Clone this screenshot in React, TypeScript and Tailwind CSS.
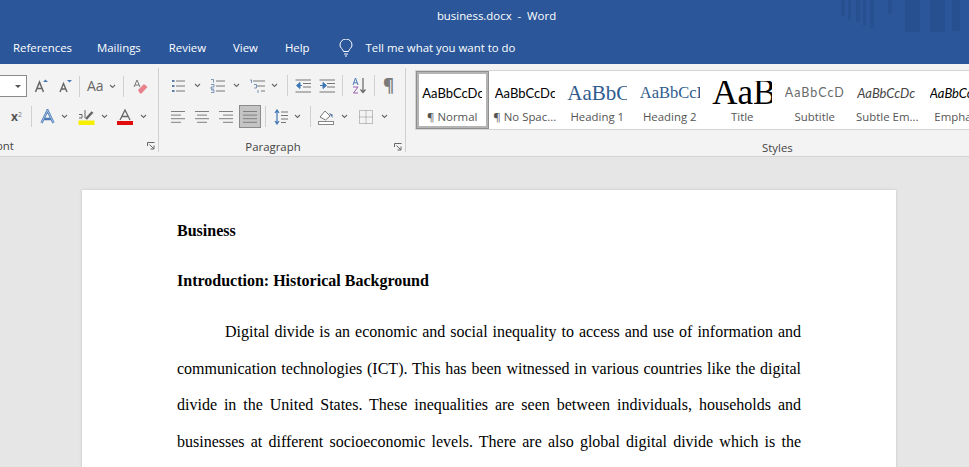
import React from 'react';

const ui = { fontFamily: '"Open Sans", "Noto Sans", sans-serif' };

type IconProps = { children: React.ReactNode; w?: number; h?: number; className?: string };

function Icon({ children, w = 16, h = 16, className = '' }: IconProps) {
  return (
    <svg width={w} height={h} viewBox={`0 0 ${w} ${h}`} fill="none" className={`block shrink-0 ${className}`}>
      {children}
    </svg>
  );
}

function Chevron({ className = '' }: { className?: string }) {
  return (
    <svg width="7" height="5" viewBox="0 0 7 5" fill="none" className={`block shrink-0 ${className}`}>
      <path d="M1 1l2.5 2.5L6 1" stroke="#6a6a6a" strokeWidth="1.1" />
    </svg>
  );
}

function Divider({ className = '' }: { className?: string }) {
  return <div className={`h-[21px] w-px shrink-0 bg-[#d0d0d0] ${className}`} />;
}

function Launcher({ className = '' }: { className?: string }) {
  return (
    <svg width="8" height="8" viewBox="0 0 8 8" fill="none" className={`block shrink-0 ${className}`}>
      <path d="M0.5 4V0.5H7.5M2.5 2.5l4 4M7 3.5V7H3.5" stroke="#666" strokeWidth="1" />
    </svg>
  );
}

function Lines({ rows, w = 14 }: { rows: [number, number][]; w?: number }) {
  return (
    <Icon w={w} h={14}>
      {rows.map(([x1, x2], i) => (
        <path key={i} d={`M${x1} ${1.5 + i * 3.6}H${x2}`} stroke="#7f7f7f" />
      ))}
    </Icon>
  );
}

function FontGroup() {
  return (
    <div className="relative flex h-[84px] w-[159px] shrink-0 flex-col border-r border-[#d0d0d0]">
      <div className="mt-[7px] flex h-[22px] items-center">
        <div className="flex h-[22px] w-[27px] items-center justify-end border-y border-r border-[#8a8a8a] bg-white pr-[5px]">
          <div className="h-0 w-0 border-x-[3px] border-t-[3px] border-x-transparent border-t-[#555]" />
        </div>
        <div className="ml-[7px] flex w-[14px] items-center justify-center">
          <Icon w={14} h={14}>
            <path d="M1.5 13L5.5 3 9.5 13M3 9.5H8" stroke="#666" strokeWidth="1.5" />
            <path d="M9 3l2.5-2.5L14 3z" fill="#4a7ab5" />
          </Icon>
        </div>
        <div className="ml-[11px] flex w-[12px] items-center justify-center">
          <Icon w={13} h={14}>
            <path d="M1 13l3.500-8.500L8 13M2.500 10H6.500" stroke="#666" strokeWidth="1.400" />
            <path d="M8 1h5l-2.500 2.500z" fill="#4a7ab5" />
          </Icon>
        </div>
        <Divider className="ml-[8px]" />
        <span className="ml-[7px] text-[14px] leading-none text-[#666]">Aa</span>
        <Chevron className="ml-[5px]" />
        <Divider className="ml-[7px]" />
        <div className="ml-[9px]">
          <Icon w={15} h={15}>
            <path d="M1 8L4 1l3 7M2 6h4" stroke="#777" strokeWidth="1" />
            <path d="M5 11l6-6 3.500 3-6 6.500H7z" fill="#e8808e" />
          </Icon>
        </div>
      </div>
      <div className="mt-[9px] flex h-[22px] items-center pl-[11px]">
        <span className="text-[12px] font-bold leading-none text-[#555]">x</span>
        <span className="mb-[5px] text-[7px] leading-none text-[#777]">2</span>
        <Divider className="ml-[9px]" />
        <div className="ml-[8px]">
          <Icon w={15} h={15}>
            <path d="M1.500 14L7.500 1.500 13.500 14M4 10h7" stroke="#4a7ab5" strokeWidth="2.400" />
            <path d="M1.500 14L7.500 1.500 13.500 14" stroke="#cfe0f2" strokeWidth="0.700" />
          </Icon>
        </div>
        <Chevron className="ml-[6px]" />
        <div className="ml-[10px]">
          <Icon w={17} h={16}>
            <rect x="0.500" y="11.500" width="16" height="4.500" fill="#f6f000" />
            <path d="M8 10l6.500-7" stroke="#666" strokeWidth="2.500" />
            <path d="M1 5.500h3v3.500H1M7 1v8" stroke="#666" strokeWidth="1" />
          </Icon>
        </div>
        <Chevron className="ml-[6px]" />
        <div className="ml-[9px]">
          <Icon w={16} h={16}>
            <path d="M3 11L8 1l5 10M5 7.500h6" stroke="#666" strokeWidth="1.300" />
            <rect y="12" width="16" height="4" fill="#e00b0b" />
          </Icon>
        </div>
        <Chevron className="ml-[7px]" />
      </div>
      <div className="relative mt-[11px] h-[16px] text-[11.4px] leading-[16px] text-[#444]">
        <span className="absolute left-[-10px]">Font</span>
        <Launcher className="absolute left-[147px] top-[4px]" />
      </div>
    </div>
  );
}

function ParagraphGroup() {
  return (
    <div className="relative flex h-[84px] w-[247px] shrink-0 flex-col border-r border-[#d0d0d0]">
      <div className="mt-[7px] flex h-[22px] items-center pl-[12px]">
        <Icon w={15} h={14}>
          <path d="M5 2H14M5 7H14M5 12H14" stroke="#777" />
          <path d="M1 2h2.500M1 7h2.500M1 12h2.500" stroke="#5d7ea8" strokeWidth="2" />
        </Icon>
        <Chevron className="ml-[8px]" />
        <Icon w={15} h={14} className="ml-[9px]">
          <path d="M6 2H15M6 7H15M6 12H15" stroke="#777" />
          <path d="M1 0.500h2.500V3.500M1 5.500h3V8H1V10h3M1 11h3v2.500H1" stroke="#5d7ea8" strokeWidth="0.800" />
        </Icon>
        <Chevron className="ml-[8px]" />
        <Icon w={17} h={14} className="ml-[9px]">
          <path d="M4 2H16M8 7H16M12 12H16" stroke="#777" />
          <path d="M1 1h1.500V4M5 5.500h2.500V9H5M9 11v3" stroke="#5d7ea8" strokeWidth="0.800" />
        </Icon>
        <Chevron className="ml-[5px]" />
        <Divider className="ml-[9px]" />
        <Icon w={17} h={14} className="ml-[7px]">
          <path d="M0.500 1H16M8 4.500H16M8 8H16M0.500 13H16" stroke="#777" />
          <path d="M7 6.500H2M5 3.500L1.500 6.500 5 9.500z" fill="#3f77b5" stroke="#3f77b5" />
        </Icon>
        <Icon w={17} h={14} className="ml-[7px]">
          <path d="M0.500 1H16M8 4.500H16M8 8H16M0.500 13H16" stroke="#777" />
          <path d="M1 6.500H5M4 3.500L7.500 6.500 4 9.500z" fill="#3f77b5" stroke="#3f77b5" />
        </Icon>
        <Divider className="ml-[6px]" />
        <Icon w={15} h={17} className="ml-[9px]">
          <path d="M1 8L3.500 1 6 8M2 5.800h3" stroke="#4a7ab5" />
          <path d="M1 10h5L1.500 16H6" stroke="#9a5fb3" />
          <path d="M11 1v14M8.500 12.500L11 15.500l2.500-3" stroke="#666" strokeWidth="1.200" />
        </Icon>
        <Divider className="ml-[7px]" />
        <span className="ml-[8px] text-[17px] font-bold leading-none text-[#7a7a7a]">¶</span>
      </div>
      <div className="mt-[9px] flex h-[23px] items-center pl-[12px]">
        <Lines rows={[[0, 14], [0, 10], [0, 14], [0, 10]]} />
        <div className="ml-[10px]">
          <Lines rows={[[0, 14], [2, 12], [0, 14], [2, 12]]} />
        </div>
        <div className="ml-[10px]">
          <Lines rows={[[0, 14], [4, 14], [0, 14], [4, 14]]} />
        </div>
        <div className="ml-[6px] flex h-[23px] w-[22px] items-center justify-center border border-[#8b8b8b] bg-[#c4c4c4]">
          <Lines rows={[[0, 14], [0, 14], [0, 14], [0, 14]]} />
        </div>
        <Divider className="ml-[4px]" />
        <Icon w={14} h={16} className="ml-[8px]">
          <path d="M7 3H14M7 6.500H14M7 10H14M7 13.500H12" stroke="#777" />
          <path d="M3 1v14M1 4l2-3 2 3M1 12l2 3 2-3" stroke="#3f77b5" strokeWidth="1.200" />
        </Icon>
        <Chevron className="ml-[6px]" />
        <Divider className="ml-[9px]" />
        <Icon w={17} h={16} className="ml-[7px]">
          <path d="M2 8l5-6 5 5-4.500 4z" stroke="#777" fill="#fff" />
          <path d="M11 4l3.500 1.500V9z" fill="#4a6f9c" />
          <rect x="0.500" y="12.500" width="15" height="3" stroke="#888" fill="#fff" />
        </Icon>
        <Chevron className="ml-[6px]" />
        <Icon w={14} h={14} className="ml-[11px]">
          <path d="M0.500 0.500H13.500V13.500H0.500ZM7 0.500V13.500M0.500 7H13.500" stroke="#8a8a8a" strokeDasharray="1 1" />
        </Icon>
        <Chevron className="ml-[8px]" />
      </div>
      <div className="relative mt-[11px] h-[16px] text-center text-[11.4px] leading-[16px] text-[#444]">
        <span className="relative left-[-9px]">Paragraph</span>
        <Launcher className="absolute left-[235px] top-[4px]" />
      </div>
    </div>
  );
}

const calibri = '"Lato", sans-serif';
const cambria = '"Liberation Serif", serif';

const styles = [
  { preview: 'AaBbCcDc', label: '¶ Normal', cls: 'text-[13px] text-black', font: calibri },
  { preview: 'AaBbCcDc', label: '¶ No Spac...', cls: 'text-[13px] text-black', font: calibri },
  { preview: 'AaBbC', label: 'Heading 1', cls: 'text-[21px] text-[#2f5c8f]', font: cambria },
  { preview: 'AaBbCcI', label: 'Heading 2', cls: 'text-[16.500px] text-[#2f5c8f]', font: cambria },
  { preview: 'AaB', label: 'Title', cls: 'text-[35px] text-black', font: cambria },
  { preview: 'AaBbCcD', label: 'Subtitle', cls: 'text-[12.500px] tracking-[1px] text-[#6a6a6a]', font: calibri },
  { preview: 'AaBbCcDc', label: 'Subtle Em...', cls: 'text-[13px] italic text-[#444]', font: calibri },
  { preview: 'AaBbCcDc', label: 'Emphasis', cls: 'text-[13px] italic text-black', font: calibri },
];

function StylesGroup() {
  return (
    <div className="relative flex h-[84px] min-w-0 flex-1 flex-col">
      <div className="ml-[9px] mt-[2px] flex h-[60px] w-[600px] shrink-0 border border-[#d4d4d4] bg-white">
        {styles.map((s, i) => (
          <div
            key={s.label}
            className={`flex h-full w-[72.500px] shrink-0 flex-col items-center ${
              i === 0 ? 'border-[3px] border-[#b4b4b4] outline outline-1 -outline-offset-[1px] outline-[#8f8f8f]' : ''
            }`}
          >
            <div
              className={`h-[24px] w-[60px] shrink-0 overflow-hidden whitespace-nowrap leading-[24px] ${
                i === 0 ? 'mt-[7px]' : 'mt-[10px]'
              } ${s.cls}`}
              style={{ fontFamily: s.font }}
            >
              {s.preview}
            </div>
            <div className="mt-[4px] whitespace-nowrap text-[11.4px] leading-[16px] text-[#555]">{s.label}</div>
          </div>
        ))}
      </div>
      <div className="ml-[356px] mt-[10px] h-[16px] text-[11.4px] leading-[16px] text-[#444]">Styles</div>
    </div>
  );
}

const bodyLines = [
  'Digital divide is an economic and social inequality to access and use of information and',
  'communication technologies (ICT). This has been witnessed in various countries like the digital',
  'divide in the United States. These inequalities are seen between individuals, households and',
  'businesses at different socioeconomic levels. There are also global digital divide which is the',
];

export default function App() {
  return (
    <div className="flex h-[467px] w-[969px] flex-col overflow-hidden bg-[#e6e6e6]" style={ui}>
      <header className="relative h-[32px] shrink-0 bg-[#2b579a]">
        <div className="text-center text-[11.4px] leading-[32px] text-white">
          <span className="relative left-[12px] whitespace-pre">business.docx  -  Word</span>
        </div>
        <svg width="140" height="38" viewBox="0 0 140 38" className="absolute right-0 top-0 opacity-50">
          <g fill="#234a85">
            <rect x="12" width="4" height="16" />
            <rect x="19" width="3" height="20" />
            <rect x="27" width="4" height="22" />
            <rect x="34" width="3" height="26" />
            <rect x="41" width="4" height="28" />
            <rect x="59" width="4" height="14" />
            <rect x="76" width="15" height="32" />
            <rect x="101" width="15" height="36" />
            <rect x="123" width="8" height="31" />
          </g>
        </svg>
      </header>
      <nav className="z-10 flex h-[32px] shrink-0 items-center bg-[#2b579a] pl-[13px] text-[11.4px] text-white">
        <span>References</span>
        <span className="ml-[25px]">Mailings</span>
        <span className="ml-[28px]">Review</span>
        <span className="ml-[27px]">View</span>
        <span className="ml-[27px]">Help</span>
        <svg width="14" height="18" viewBox="0 0 14 18" fill="none" className="ml-[29px]">
          <path d="M4.500 12.500C4 10 1 9 1 6a6 6 0 0 1 12 0c0 3-3 4-3.500 6.500zM5 15h4M6 17h2" stroke="#fff" />
        </svg>
        <span className="ml-[13px]">Tell me what you want to do</span>
      </nav>
      <section className="flex h-[93px] shrink-0 overflow-hidden border-b border-[#d2d2d2] bg-[#f3f3f3] pt-[4px]">
        <FontGroup />
        <ParagraphGroup />
        <StylesGroup />
      </section>
      <main className="flex min-h-0 flex-1 pl-[82px] pt-[33px]">
        <article
          className="h-[400px] w-[814px] shrink-0 bg-white px-[95px] pt-[29px] text-[16px] text-black shadow-[0_0_3px_rgba(0,0,0,0.15)]"
          style={{ fontFamily: '"Liberation Serif", serif' }}
        >
          <p className="font-bold leading-[24px]">Business</p>
          <p className="mt-[26px] font-bold leading-[24px]">Introduction: Historical Background</p>
          {bodyLines.map((line, i) => (
            <p
              key={line}
              className={`h-[36.4px] leading-[36.4px] [text-align:justify] [text-align-last:justify] ${
                i === 0 ? 'mt-[21.400px] indent-[48px]' : ''
              }`}
            >
              {line}
            </p>
          ))}
        </article>
      </main>
    </div>
  );
}
